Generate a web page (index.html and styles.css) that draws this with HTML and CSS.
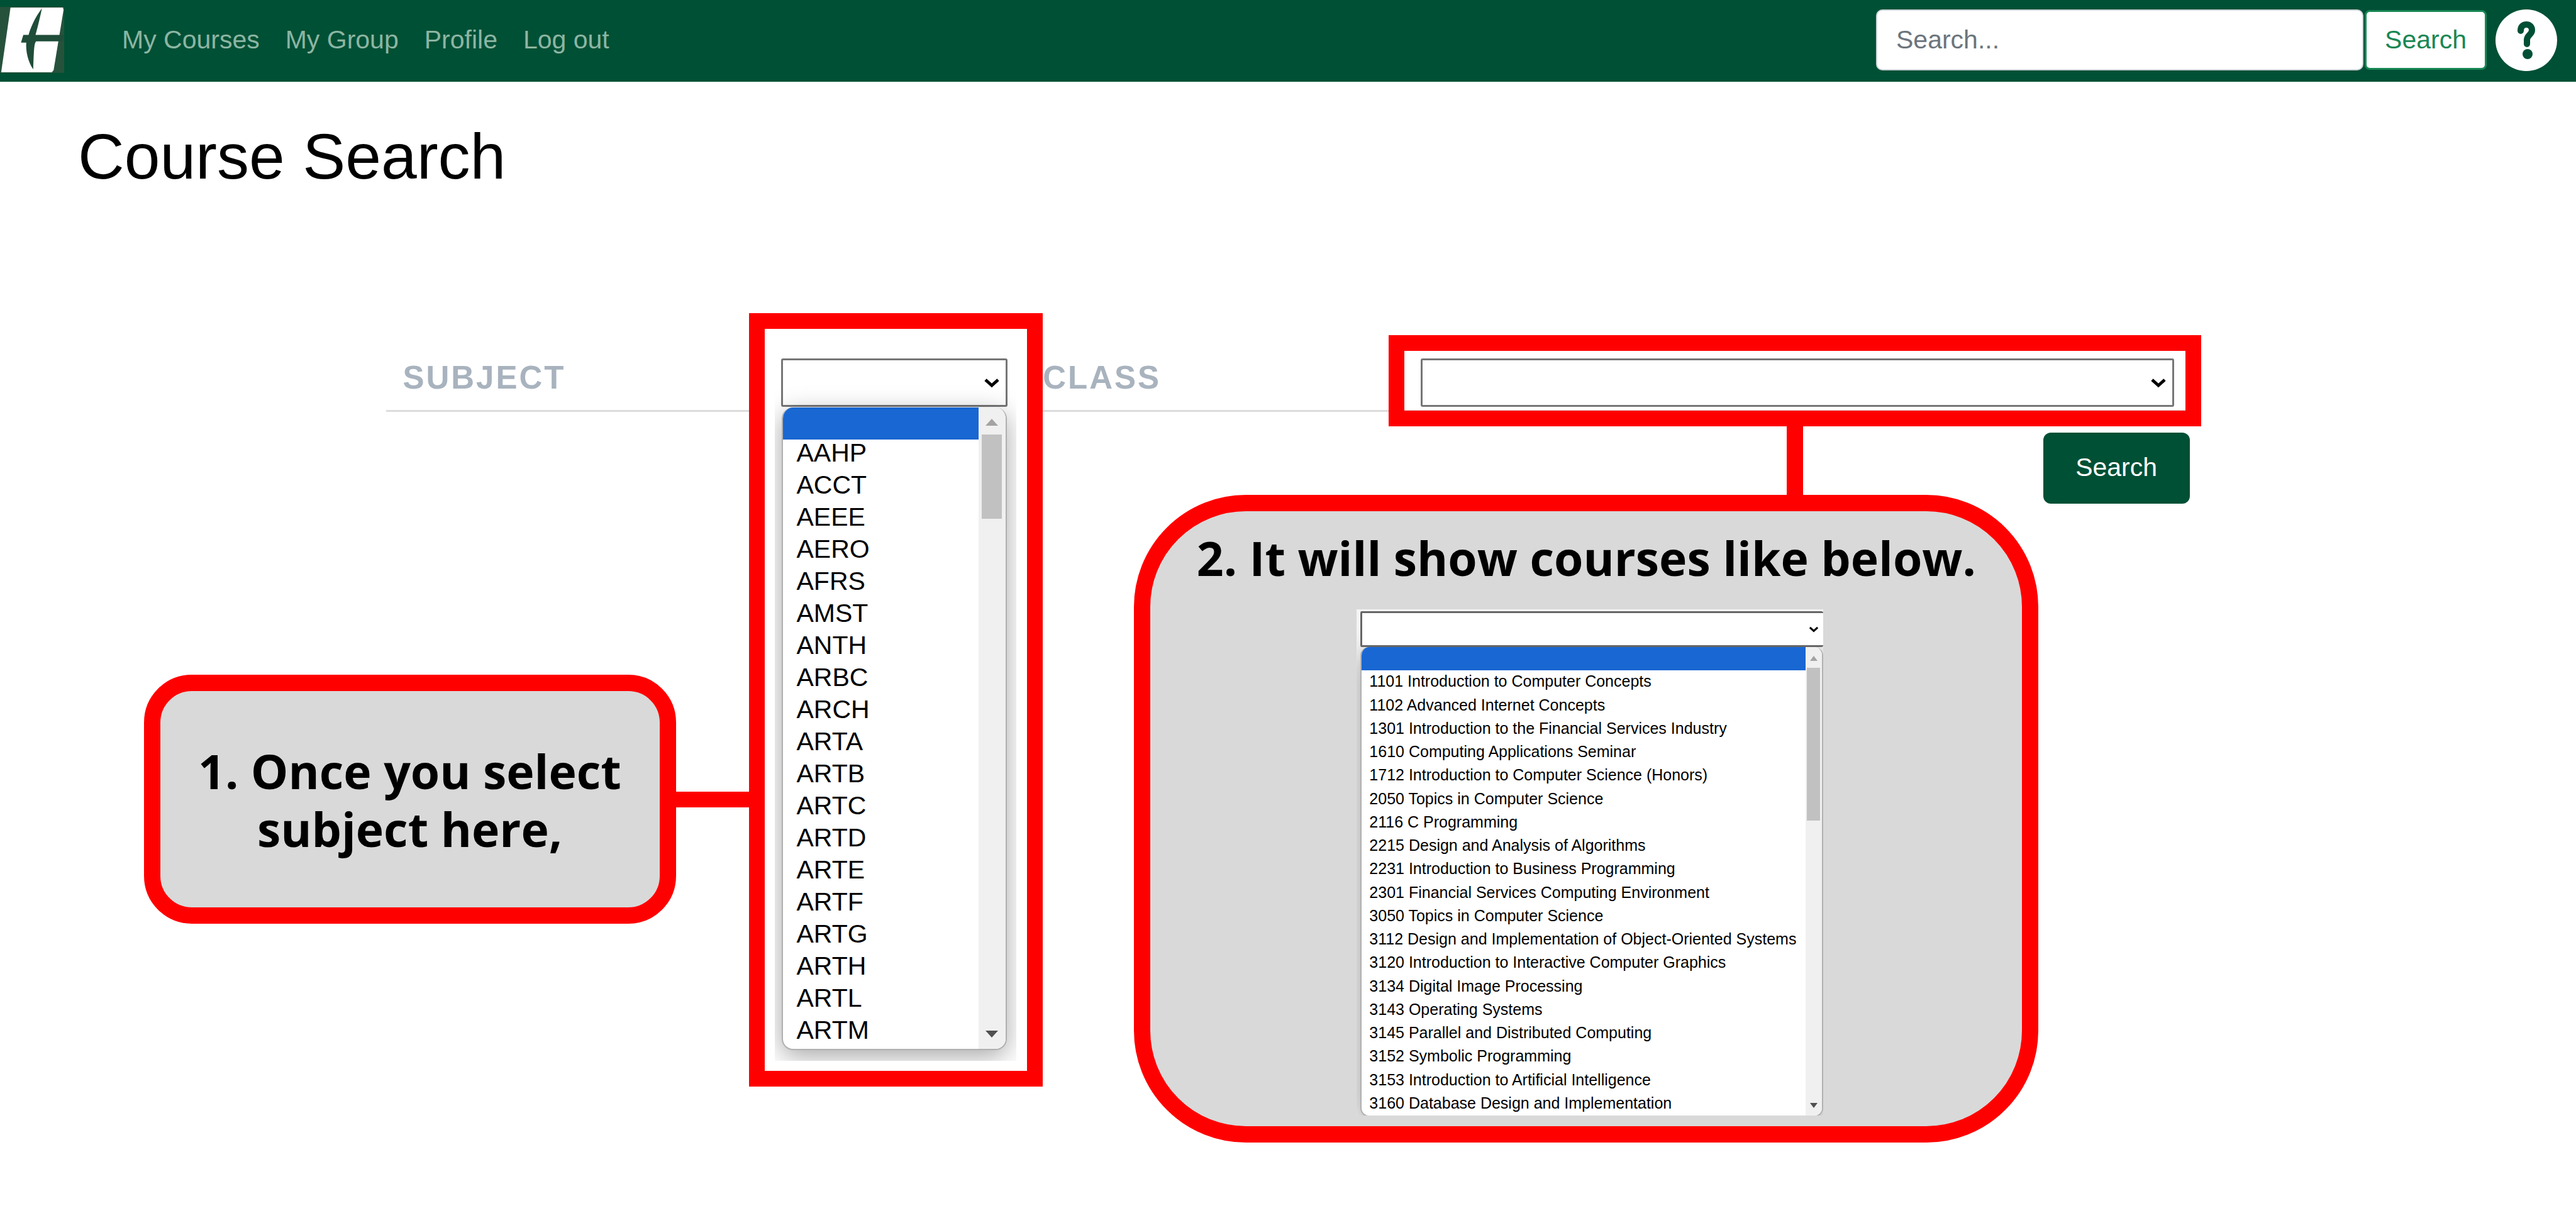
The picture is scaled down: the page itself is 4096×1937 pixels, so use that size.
FILE: index.html
```html
<!DOCTYPE html>
<html lang="en">
<head>
<meta charset="utf-8">
<title>Course Search</title>
<link rel="stylesheet" href="styles.css">
</head>
<body>
<header class="navbar">
  <a class="logo" href="#" aria-label="Home">
    <svg viewBox="0 0 110 113" aria-hidden="true">
      <rect width="110" height="113" fill="#26523c"/>
      <path d="M18 1H108L109 5L92 108L89 112H2Z" fill="#fff"/>
      <path d="M72 2C66 30 62 44 61 48H110L108 59H62C58 62 58 80 57 107C48 94 44 76 45 61H36L40 48H49C52 36 60 18 72 2Z" fill="#1f4d39"/>
    </svg>
  </a>
  <nav class="links">
    <a href="#">My Courses</a>
    <a href="#">My Group</a>
    <a href="#">Profile</a>
    <a href="#">Log out</a>
  </nav>
  <form class="site-search">
    <input class="site-search-input" type="search" placeholder="Search..." aria-label="Search the site">
    <button class="site-search-button" type="button">Search</button>
  </form>
  <button class="help" type="button" aria-label="Help">
    <svg viewBox="0 0 28 60" aria-hidden="true">
      <path d="M5 15C5 8 9 5 14 5C20 5 23 9 23 14C23 21 15 22 15 29V36" fill="none" stroke="#005035" stroke-width="10" stroke-linecap="round"/>
      <circle cx="16" cy="52" r="8" fill="#005035"/>
    </svg>
  </button>
</header>

<main>
  <h1 class="title">Course Search</h1>

  <form class="course-form">
    <div class="criteria">
      <label class="criteria-label" for="subject">Subject</label>
      <div class="criteria-cell">
        <div class="field field-subject">
          <div class="frame frame-subject"></div>
          <div class="select-box">
            <select class="select" id="subject"><option></option></select>
            <svg class="chevron" viewBox="0 0 26 16" aria-hidden="true"><path d="M3 3L13 12L23 3"/></svg>
          </div>
          <div class="popup-area">
            <div class="popup">
              <ul class="options" role="listbox" aria-label="Subjects">
                <li class="option is-active" role="option" aria-label="None"></li>
                <li class="option" role="option">AAHP</li>
                <li class="option" role="option">ACCT</li>
                <li class="option" role="option">AEEE</li>
                <li class="option" role="option">AERO</li>
                <li class="option" role="option">AFRS</li>
                <li class="option" role="option">AMST</li>
                <li class="option" role="option">ANTH</li>
                <li class="option" role="option">ARBC</li>
                <li class="option" role="option">ARCH</li>
                <li class="option" role="option">ARTA</li>
                <li class="option" role="option">ARTB</li>
                <li class="option" role="option">ARTC</li>
                <li class="option" role="option">ARTD</li>
                <li class="option" role="option">ARTE</li>
                <li class="option" role="option">ARTF</li>
                <li class="option" role="option">ARTG</li>
                <li class="option" role="option">ARTH</li>
                <li class="option" role="option">ARTL</li>
                <li class="option" role="option">ARTM</li>
              </ul>
              <div class="scrollbar">
                <svg class="arrow" viewBox="0 0 20 11" aria-hidden="true"><path d="M0 11L10 0L20 11Z" fill="#a3a3a3"/></svg>
                <div class="thumb"></div>
                <svg class="arrow arrow-down" viewBox="0 0 20 11" aria-hidden="true"><path d="M0 0H20L10 11Z" fill="#505050"/></svg>
              </div>
            </div>
          </div>
          <div class="connector connector-subject"></div>
          <p class="callout callout-subject">1. Once you select subject here,</p>
        </div>
      </div>

      <label class="criteria-label" for="class">Class</label>
      <div class="criteria-cell">
        <div class="field">
          <div class="select-box">
            <select class="select" id="class"><option></option></select>
            <svg class="chevron" viewBox="0 0 26 16" aria-hidden="true"><path d="M3 3L13 12L23 3"/></svg>
          </div>
          <div class="frame frame-class"></div>
          <div class="connector connector-class"></div>
          <div class="callout callout-class">
            <p class="callout-text">2. It will show courses like below.</p>
            <div class="sample">
              <div class="select-box">
                <select class="select select-sample" aria-label="Class example"><option></option></select>
                <svg class="chevron chevron-sample" viewBox="0 0 26 16" aria-hidden="true"><path d="M3 3L13 12L23 3"/></svg>
              </div>
              <div class="popup popup-sample">
                <ul class="options options-sample" role="listbox" aria-label="Classes">
                  <li class="course is-active" role="option" aria-label="None"></li>
                  <li class="course" role="option">1101 Introduction to Computer Concepts</li>
                  <li class="course" role="option">1102 Advanced Internet Concepts</li>
                  <li class="course" role="option">1301 Introduction to the Financial Services Industry</li>
                  <li class="course" role="option">1610 Computing Applications Seminar</li>
                  <li class="course" role="option">1712 Introduction to Computer Science (Honors)</li>
                  <li class="course" role="option">2050 Topics in Computer Science</li>
                  <li class="course" role="option">2116 C Programming</li>
                  <li class="course" role="option">2215 Design and Analysis of Algorithms</li>
                  <li class="course" role="option">2231 Introduction to Business Programming</li>
                  <li class="course" role="option">2301 Financial Services Computing Environment</li>
                  <li class="course" role="option">3050 Topics in Computer Science</li>
                  <li class="course" role="option">3112 Design and Implementation of Object-Oriented Systems</li>
                  <li class="course" role="option">3120 Introduction to Interactive Computer Graphics</li>
                  <li class="course" role="option">3134 Digital Image Processing</li>
                  <li class="course" role="option">3143 Operating Systems</li>
                  <li class="course" role="option">3145 Parallel and Distributed Computing</li>
                  <li class="course" role="option">3152 Symbolic Programming</li>
                  <li class="course" role="option">3153 Introduction to Artificial Intelligence</li>
                  <li class="course" role="option">3160 Database Design and Implementation</li>
                </ul>
                <div class="scrollbar scrollbar-sample">
                  <svg class="arrow arrow-sample" viewBox="0 0 12 8" aria-hidden="true"><path d="M0 8L6 0L12 8Z" fill="#a3a3a3"/></svg>
                  <div class="thumb thumb-sample"></div>
                  <svg class="arrow arrow-sample arrow-down" viewBox="0 0 12 8" aria-hidden="true"><path d="M0 0H12L6 8Z" fill="#505050"/></svg>
                </div>
              </div>
            </div>
          </div>
        </div>
      </div>
    </div>
    <button class="submit" type="button">Search</button>
  </form>
</main>
</body>
</html>
```
FILE: styles.css
```css
* {
  box-sizing: border-box;
}

body {
  margin: 0;
  min-height: 100vh;
  background: #fff;
  color: #000;
  font-family: "Liberation Sans", Arial, sans-serif;
  font-size: 41px;
}

button,
input,
select {
  font: inherit;
}

/* Top bar */
.navbar {
  display: flex;
  align-items: center;
  height: 130px;
  padding: 0 30px 3px 0;
  background: #005035;
}

.logo svg {
  display: block;
  width: 102px;
  height: 105px;
}

.links {
  display: flex;
  gap: 41px;
  margin-left: 92px;
}

.links a {
  color: #8cb5a3;
  text-decoration: none;
}

.site-search {
  display: flex;
  align-items: center;
  gap: 2px;
  margin-left: auto;
}

.site-search-input {
  width: 775px;
  height: 97px;
  padding: 0 30px;
  border: 2px solid #ced4da;
  border-radius: 10px;
  background: #fff;
  appearance: none;
}

.site-search-input::placeholder {
  color: #6c757d;
  opacity: 1;
}

.site-search-button {
  width: 194px;
  height: 95px;
  padding: 0;
  border: 3px solid #198754;
  border-radius: 8px;
  background: #fff;
  color: #198754;
}

.help {
  display: flex;
  align-items: center;
  justify-content: center;
  width: 98px;
  height: 98px;
  margin-left: 14px;
  padding: 0;
  border: 0;
  border-radius: 50%;
  background: #fff;
}

.help svg {
  width: 28px;
  height: 60px;
}

/* Page */
.title {
  margin: 58px 124px 260px;
  font-size: 102px;
  font-weight: 400;
  line-height: 122px;
}

.course-form {
  display: flex;
  flex-direction: column;
  margin: 0 15%;
}

.criteria {
  display: grid;
  grid-template-columns: 21fr 14.5fr 21fr 43.5fr;
  align-items: start;
  padding-bottom: 5px;
  border-bottom: 3px solid #dcdcdc;
}

.criteria-label {
  padding: 0 26px;
  color: #a8b3be;
  font-size: 51px;
  font-weight: 700;
  letter-spacing: 3px;
  line-height: 62px;
  text-transform: uppercase;
}

.criteria-cell {
  min-width: 0;
  padding: 0 25px;
}

.field {
  position: relative;
}

.field-subject {
  width: 360px;
}

.select-box {
  position: relative;
}

.select {
  display: block;
  width: 100%;
  height: 77px;
  padding: 0 50px 0 10px;
  border: 3px solid #767676;
  border-radius: 3px;
  background: #fff;
  appearance: none;
}

.chevron {
  position: absolute;
  top: 31px;
  right: 12px;
  width: 26px;
  height: 16px;
  fill: none;
  stroke: #000;
  stroke-width: 5px;
}

.submit {
  align-self: flex-end;
  width: 233px;
  height: 113px;
  margin-top: 33px;
  padding: 0 0 2px;
  border: 0;
  border-radius: 12px;
  background: #005035;
  color: #fff;
}

/* Open drop-down */
.popup-area {
  position: absolute;
  top: 0;
  left: -10px;
  width: 384px;
  padding: 78px 15px 17px 11px;
  overflow: hidden;
}

.popup {
  display: flex;
  overflow: hidden;
  border: 2px solid #b0b0b0;
  border-top: 0;
  border-radius: 18px;
  background: #fff;
  box-shadow: 0 10px 40px rgba(0, 0, 0, 0.35);
}

.options {
  flex: 1;
  min-width: 0;
  margin: 0;
  padding: 0;
  list-style: none;
}

.option {
  height: 51px;
  padding: 0 22px 8px;
  line-height: 43px;
}

.is-active {
  background: #1967d2;
}

.scrollbar {
  display: flex;
  flex-direction: column;
  width: 43px;
  padding: 18px 0 18px;
  background: #f0f0f0;
}

.arrow {
  align-self: center;
  width: 20px;
  height: 11px;
}

.thumb {
  height: 134px;
  margin: 14px 6px 0 5px;
  background: #c1c1c1;
}

.arrow-down {
  margin-top: auto;
}

/* Red guides */
.frame,
.connector,
.callout {
  position: absolute;
}

.frame {
  border: 25px solid #f00;
}

.frame-subject {
  top: -72px;
  left: -51px;
  width: 467px;
  height: 1230px;
  background: #fff;
}

.frame-class {
  inset: -37px -43px -31px -51px;
}

.connector {
  background: #f00;
}

.connector-subject {
  top: 689px;
  left: -170px;
  width: 122px;
  height: 25px;
}

.connector-class {
  top: 106px;
  left: 582px;
  width: 26px;
  height: 114px;
}

.callout {
  border: 26px solid #f00;
  background: #d9d9d9;
  color: #000;
  font-family: "Open Sans", "Noto Sans", sans-serif;
  font-size: 75px;
  font-weight: 700;
  line-height: 92px;
}

.callout-subject {
  display: flex;
  align-items: center;
  top: 503px;
  left: -1013px;
  width: 846px;
  height: 396px;
  margin: 0;
  padding: 2px 40px 0;
  border-radius: 76px;
  text-align: center;
}

.callout-class {
  display: flex;
  flex-direction: column;
  top: 217px;
  left: -456px;
  width: 1438px;
  height: 1030px;
  padding-top: 28px;
  border-radius: 178px;
}

.callout-text {
  margin: 0 0 36px;
  text-align: center;
  white-space: nowrap;
}

.sample {
  width: 742px;
  height: 805px;
  margin-left: 328px;
  padding: 3px 0 0 6px;
  overflow: hidden;
  background: #f4f4f4;
  font-family: "Liberation Sans", Arial, sans-serif;
  font-size: 25px;
  font-weight: 400;
}

.select-sample {
  height: 57px;
  border-right: 0;
  border-color: #666;
}

.chevron-sample {
  top: 23px;
  right: 7px;
  width: 16px;
  height: 12px;
}

.popup-sample {
  height: 747px;
  border-radius: 14px;
}

.options-sample {
  display: grid;
  grid-auto-rows: 1fr;
}

.course {
  min-height: 0;
  padding: 0 12px;
  line-height: 34px;
  white-space: nowrap;
}

.scrollbar-sample {
  width: 26px;
  padding: 14px 0 12px;
}

.arrow-sample {
  width: 12px;
  height: 8px;
}

.thumb-sample {
  height: 243px;
  margin: 11px 3px 0 2px;
}
```
